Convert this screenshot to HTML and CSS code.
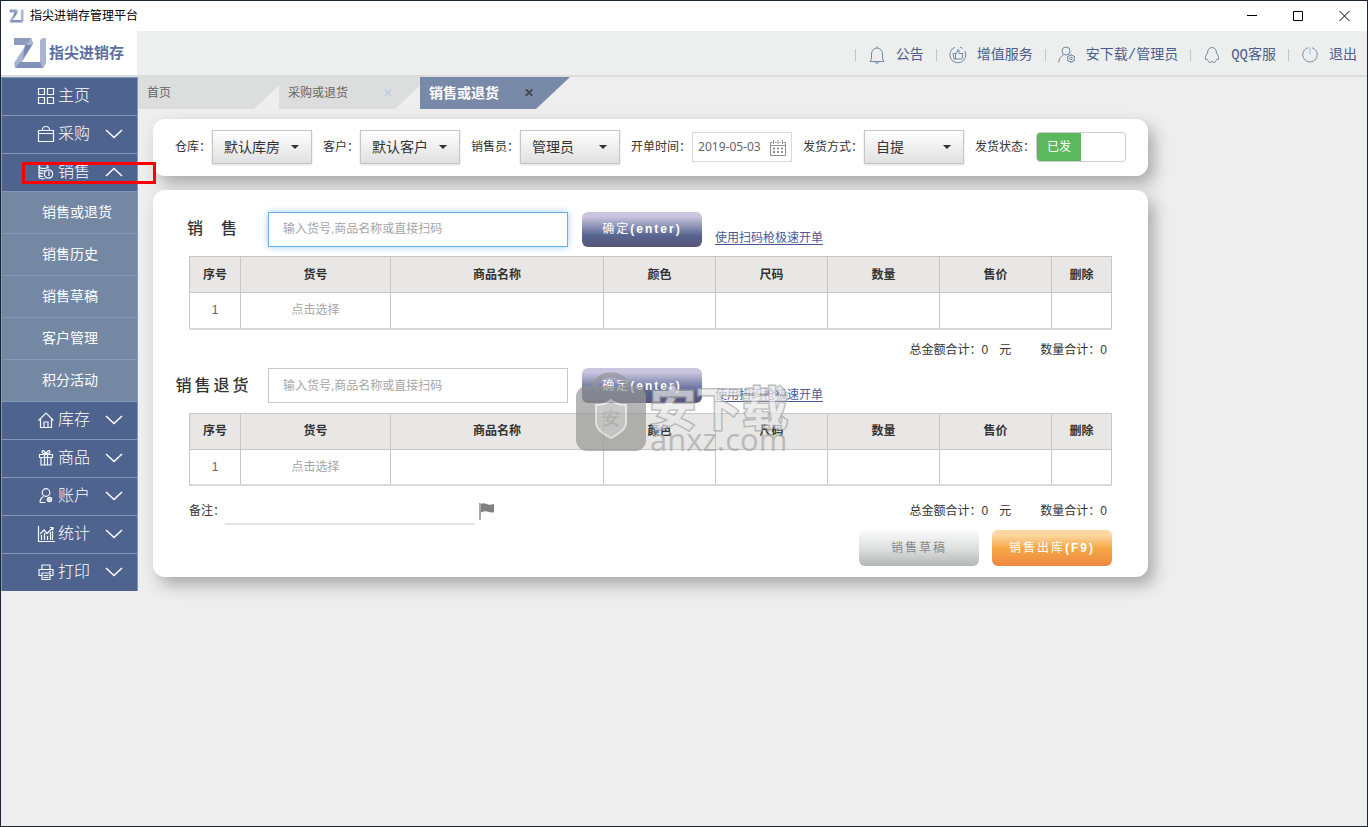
FILE: index.html
```html
<!DOCTYPE html>
<html lang="zh-CN">
<head>
<meta charset="utf-8">
<title>指尖进销存管理平台</title>
<link rel="stylesheet" href="styles.css">
</head>
<body>
<svg class="defs" aria-hidden="true">
  <defs>
    <symbol id="brand" viewBox="0 0 34 32">
      <path d="M1 1h17l2 5-2 2H1z" fill="#8d9cc0"/>
      <path d="M18 1l2 6L9 25 2 31l-1-5L13 8z" fill="#a9b5d1"/>
      <path d="M12 8h6l2-2L10 22z" fill="#7486b1"/>
      <path d="M2 31l5-6h20l6 1-3 5z" fill="#8191b9"/>
      <path d="M27 3l3-2h3v25l-3 5-3-6z" fill="#a9b5d1"/>
    </symbol>
    <symbol id="chevron-down" viewBox="0 0 18 10"><path d="M1 1l8 7.500l8-7.500"/></symbol>
    <symbol id="chevron-up" viewBox="0 0 18 10"><path d="M1 9l8-7.500l8 7.500"/></symbol>
    <symbol id="calendar" viewBox="0 0 16 17">
      <path d="M2.500 3.500h-2v13h15v-13h-2M5 3.500h1.500M9.500 3.500h1.500M.5 6.500h15M3.500 1v4M8 1v4M12.500 1v4"/>
      <path d="M3 9.500h10M3 13h10" stroke-width="2" stroke-dasharray="2 2"/>
    </symbol>
  </defs>
</svg>

<div class="window">
  <header class="titlebar">
    <svg class="titlebar-logo" aria-hidden="true"><use href="#brand"/></svg>
    <h1 class="titlebar-text">指尖进销存管理平台</h1>
    <div class="window-buttons">
      <button type="button" aria-label="最小化"><svg viewBox="0 0 11 11"><path d="M0 4.500h10"/></svg></button>
      <button type="button" aria-label="最大化"><svg viewBox="0 0 11 11"><path d="M.5.5h9v9h-9z"/></svg></button>
      <button type="button" aria-label="关闭"><svg viewBox="0 0 11 11"><path d="M.5 0l10 10M10.500 0l-10 10"/></svg></button>
    </div>
  </header>

  <div class="topbar">
    <a class="logo" href="#home">
      <svg class="logo-mark" aria-hidden="true"><use href="#brand"/></svg>
      <span class="logo-text">指尖进销存</span>
    </a>
    <nav class="topnav">
      <a href="#notice"><svg viewBox="0 0 18 18"><path d="M3.500 13V8a5.500 6 0 0 1 11 0V13l1.500 2.500H2zM9 2V.5M7 16.500q2 1.500 4 0"/></svg>公告</a>
      <a href="#services"><svg viewBox="0 0 18 18"><path d="M6 1.300a8 8 0 1 0 9.800 3.500M11 1.200a8 8 0 0 1 2.500 1.200M4 7.500h2.500v5.500H5zM6.500 7.500h1L8.500 4h1.500v3.500H14l-1 5.500H6.500"/></svg>增值服务</a>
      <a href="#account"><svg viewBox="0 0 18 18"><circle cx="8" cy="5" r="4"/><path d="M.8 16.500C1 12.500 3 10 5.500 9"/><circle cx="13" cy="12.500" r="3.500"/><circle cx="13" cy="12.500" r="1.300"/><path d="M13 8v1M13 16v1M9 10.500l1 .5M16 14l1 .5M17 10.500l-1 .5M9 14.500l1-.5"/></svg>安下载/管理员</a>
      <a href="#qq"><svg viewBox="0 0 18 18"><path d="M9 1.500C6 1.500 4.500 4 4.500 7C2.500 9.500 2 12 2.500 13.500L4 13c.3 1 .8 1.500 1.500 2C5 16.500 7 17 9 15.500C11 17 13 16.500 12.500 15c.7-.5 1.200-1 1.500-2l1.500.5C16 12 15.500 9.500 13.500 7C13.500 4 12 1.500 9 1.500z"/></svg>QQ客服</a>
      <a href="#exit"><svg viewBox="0 0 18 18"><path d="M7 1.800a7.200 7.200 0 1 0 4 0"/><path class="power" d="M9 1v7.500"/></svg>退出</a>
    </nav>
  </div>

  <div class="body">
    <nav class="sidebar">
      <a class="nav-item" href="#home"><svg class="nav-icon" viewBox="0 0 18 18"><path d="M1.500 1.500h6v6h-6zM10.500 1.500h6v6h-6zM1.500 10.500h6v6h-6zM10.500 10.500h6v6h-6z"/></svg>主页</a>
      <a class="nav-item" href="#buy"><svg class="nav-icon" viewBox="0 0 18 18"><path d="M1.500 5.500h15v11h-15zM1.500 8.500h15M5.500 5.500v-1a3.500 3 0 0 1 7 0v1"/></svg>采购<svg class="chevron"><use href="#chevron-down"/></svg></a>
      <a class="nav-item" href="#sell" aria-expanded="true"><svg class="nav-icon" viewBox="0 0 18 18"><ellipse cx="6.500" cy="3.500" rx="4.500" ry="2"/><path d="M2 3.500v11c1 1.500 4 1.500 5.500 1M11 3.500v2M2 6.500c1 1.500 4 1.500 6 1M2 9.500c1 1 3 1 4 1M2 12.500c1 1 3 1 4 1"/><circle cx="11.500" cy="11" r="4.200"/><path d="M11 9h1v4"/></svg>销售<svg class="chevron"><use href="#chevron-up"/></svg></a>
      <div class="subnav">
        <a href="#sell-new">销售或退货</a>
        <a href="#sell-history">销售历史</a>
        <a href="#sell-draft">销售草稿</a>
        <a href="#customers">客户管理</a>
        <a href="#points">积分活动</a>
      </div>
      <a class="nav-item" href="#stock"><svg class="nav-icon" viewBox="0 0 18 18"><path d="M1.500 9.500L9 2l7.500 7.500M3.500 8v8.500h11V8M7 16v-5h4v5"/></svg>库存<svg class="chevron"><use href="#chevron-down"/></svg></a>
      <a class="nav-item" href="#goods"><svg class="nav-icon" viewBox="0 0 18 18"><path d="M2.500 5.500h13v3h-13zM4 8.500v7.500h10V8.500M9 5C7 0 4 1.500 5.500 4zM9 5c2-5 5-3.500 3.500-1z"/><path d="M7.500 5.500v10.500M10.500 5.500v10.500"/></svg>商品<svg class="chevron"><use href="#chevron-down"/></svg></a>
      <a class="nav-item" href="#accounts"><svg class="nav-icon" viewBox="0 0 18 18"><circle cx="9" cy="5.500" r="3.800"/><path d="M3 15.500c0-3 1.500-5 3.500-6M3 15.500h5.500"/><circle cx="12.500" cy="12.500" r="2.200" fill="#cdd6e8"/></svg>账户<svg class="chevron"><use href="#chevron-down"/></svg></a>
      <a class="nav-item" href="#stats"><svg class="nav-icon" viewBox="0 0 18 18"><path d="M1.500 1v15.500H18M4.500 15v-5M7.500 15V8M10.500 15v-4M13.500 15V7M15.500 15V6M3 9l4-4 3 3.500L15.500 3M13 2.500h3V5"/></svg>统计<svg class="chevron"><use href="#chevron-down"/></svg></a>
      <a class="nav-item" href="#print"><svg class="nav-icon" viewBox="0 0 18 18"><path d="M5 6V2h8v4M4.500 12.500H2V6.500h14v6h-2.500M5 10h8v6.500H5zM6.500 12.500h5M6.500 14.500h5M12 8.500h2"/></svg>打印<svg class="chevron"><use href="#chevron-down"/></svg></a>
    </nav>

    <main class="main">
      <div class="tabs">
        <a class="tab" href="#home">首页</a>
        <div class="tab"><a href="#buy-new">采购或退货</a><button type="button" aria-label="关闭采购或退货">✕</button></div>
        <div class="tab active"><a href="#sell-new">销售或退货</a><button type="button" aria-label="关闭销售或退货">✕</button></div>
      </div>

      <div class="content">
        <form class="card filters">
          <div class="field"><label for="depot">仓库：</label><span class="select"><select id="depot"><option>默认库房</option></select></span></div>
          <div class="field"><label for="customer">客户：</label><span class="select"><select id="customer"><option>默认客户</option></select></span></div>
          <div class="field"><label for="seller">销售员：</label><span class="select"><select id="seller"><option>管理员</option></select></span></div>
          <div class="field"><label for="date">开单时间：</label><span class="date"><input id="date" type="text" value="2019-05-03"><svg aria-hidden="true"><use href="#calendar"/></svg></span></div>
          <div class="field"><label for="delivery">发货方式：</label><span class="select"><select id="delivery"><option>自提</option></select></span></div>
          <div class="field"><label for="state">发货状态：</label><span class="switch"><input id="state" type="checkbox" checked><span class="switch-on">已发</span></span></div>
        </form>

        <div class="card order">
          <section>
            <div class="entry">
              <label class="entry-title" for="scan-sell">销&nbsp;&nbsp;售</label>
              <input class="scan focused" id="scan-sell" type="text" placeholder="输入货号,商品名称或直接扫码">
              <button class="button enter" type="button">确定<b>(enter)</b></button>
              <a class="scan-link" href="#scanner">使用扫码枪极速开单</a>
            </div>
            <table class="goods">
              <colgroup><col class="c-index"><col class="c-code"><col class="c-name"><col class="c-mid"><col class="c-mid"><col class="c-mid"><col class="c-mid"><col class="c-del"></colgroup>
              <thead><tr><th>序号</th><th>货号</th><th>商品名称</th><th>颜色</th><th>尺码</th><th>数量</th><th>售价</th><th>删除</th></tr></thead>
              <tbody><tr><td>1</td><td class="pick">点击选择</td><td></td><td></td><td></td><td></td><td></td><td></td></tr></tbody>
            </table>
            <div class="summary">
              <p class="totals"><span>总金额合计：<i>0</i></span><span class="unit">元</span><span>数量合计：<i>0</i></span></p>
            </div>
          </section>

          <section>
            <div class="entry">
              <label class="entry-title" for="scan-return">销售退货</label>
              <input class="scan" id="scan-return" type="text" placeholder="输入货号,商品名称或直接扫码">
              <button class="button enter" type="button">确定<b>(enter)</b></button>
              <a class="scan-link" href="#scanner">使用扫码枪极速开单</a>
            </div>
            <table class="goods">
              <colgroup><col class="c-index"><col class="c-code"><col class="c-name"><col class="c-mid"><col class="c-mid"><col class="c-mid"><col class="c-mid"><col class="c-del"></colgroup>
              <thead><tr><th>序号</th><th>货号</th><th>商品名称</th><th>颜色</th><th>尺码</th><th>数量</th><th>售价</th><th>删除</th></tr></thead>
              <tbody><tr><td>1</td><td class="pick">点击选择</td><td></td><td></td><td></td><td></td><td></td><td></td></tr></tbody>
            </table>
            <div class="summary last">
              <div class="remark">
                <label for="remark">备注：</label><input id="remark" type="text">
                <svg class="flag" viewBox="0 0 16 17" aria-hidden="true"><path d="M0 0h2v17H0z" fill="#aaa"/><path d="M2 1c3-1.500 5 0 7 .5s4 0 6-.5v8c-2 1-4 .5-6-.3S5 8 2 9.500z" fill="#808080"/></svg>
              </div>
              <p class="totals"><span>总金额合计：<i>0</i></span><span class="unit">元</span><span>数量合计：<i>0</i></span></p>
            </div>
          </section>

          <div class="actions">
            <button class="button draft" type="button">销售草稿</button>
            <button class="button submit" type="button">销售出库<b>(F9)</b></button>
          </div>

          <div class="watermark">
            <svg class="lock" viewBox="0 0 70 80" aria-hidden="true">
              <path d="M18 14C24-1 46-1 52 14" fill="none" stroke="#969696" stroke-width="5"/>
              <rect y="14" width="70" height="65" rx="11" fill="#969696"/>
              <path d="M35 28c4 4 9 5 15 5v17c0 8-8 12-15 16c-7-4-15-8-15-16V33c6 0 11-1 15-5z" fill="#b4b4b4" stroke="#dedede" stroke-width="2"/>
              <text x="35" y="53" text-anchor="middle">安</text>
            </svg>
            <div class="watermark-text"><span class="mark-name">安下载</span><span class="mark-url">anxz.com</span></div>
          </div>
        </div>
      </div>
    </main>
  </div>
  <div class="highlight"></div>
</div>
</body>
</html>
```
FILE: styles.css
```css
:root {
  --cjk: "Noto Sans CJK SC", sans-serif;
  --navy: #4f638f;
  --line: #8698ba;
  --grid: #c6c6c6;
}

* { box-sizing: border-box; }

body {
  margin: 0;
  color: #333;
  font: 12px/18px "Liberation Sans", var(--cjk);
}

button, input, select { font: inherit; color: inherit; margin: 0; }
button { border: 0; padding: 0; background: none; cursor: pointer; }
a { color: inherit; text-decoration: none; }
i { font-style: normal; }
.defs { position: absolute; width: 0; height: 0; }

.window {
  position: relative;
  display: flex;
  flex-direction: column;
  min-height: 100vh;
  border: 1px solid #1c2734;
  background: #eee;
}

/* Title bar */
.titlebar {
  display: flex;
  align-items: center;
  height: 30px;
  padding-left: 7px;
  background: #fff;
  color: #000;
}
.titlebar-logo { width: 17px; height: 14px; margin-right: 5px; }
.titlebar-text { margin: 0; font-size: 12px; font-weight: 400; }
.window-buttons { display: flex; margin-left: auto; }
.window-buttons button { display: grid; place-items: center; width: 46px; height: 30px; }
.window-buttons svg { width: 11px; height: 11px; fill: none; stroke: #000; }

/* Top bar */
.topbar {
  display: flex;
  justify-content: space-between;
  height: 46px;
  border-bottom: 2px solid #dcdddd;
  background: #edefee;
}
.logo {
  display: flex;
  align-items: center;
  gap: 2px;
  width: 136px;
  padding-left: 12px;
  background: #fff;
}
.logo-mark { width: 34px; height: 32px; }
.logo-text { color: #5b6f9f; font-size: 15px; font-weight: 700; white-space: nowrap; }
.topnav {
  display: flex;
  align-items: center;
  padding: 3px 10px 0 0;
  color: #4c5e8e;
  font: 14px/20px "Liberation Mono", var(--cjk);
}
.topnav a { display: flex; align-items: center; gap: 10px; padding-right: 12px; white-space: nowrap; }
.topnav a:last-child { padding-right: 0; }
.topnav a::before { content: ""; width: 1px; height: 12px; margin-right: 2px; background: #c4c6c6; }
.topnav svg { width: 18px; height: 18px; fill: none; stroke: #7488a6; }
.topnav .power { stroke: #8fc4e8; }

.body { display: flex; flex: 1; align-items: flex-start; }

/* Side navigation */
.sidebar {
  flex: none;
  width: 137px;
  border: solid var(--line);
  border-width: 0 1px;
  color: #fff;
}
.nav-item {
  display: flex;
  align-items: center;
  height: 38px;
  padding: 0 0 2px 35px;
  border-top: 1px solid var(--line);
  background: var(--navy);
  font-size: 16px;
  font-weight: 300;
}
.nav-icon { width: 18px; height: 18px; margin-right: 3px; fill: none; stroke: #f4f7fc; stroke-width: 1.2; }
.chevron { width: 18px; height: 10px; margin: 0 14px 0 auto; fill: none; stroke: #fff; stroke-width: 1.5; }
.subnav a {
  display: flex;
  align-items: center;
  height: 42px;
  padding: 0 0 2px 40px;
  border-top: 1px solid var(--line);
  background: #7488a3;
  font-size: 14px;
}

/* Tabs */
.main { flex: 1; min-width: 0; }
.tabs { display: flex; height: 32px; color: #666; }
.tab {
  display: flex;
  align-items: center;
  justify-content: space-between;
  width: 150px;
  margin-right: -9px;
  padding: 0 36px 0 9px;
  background: #dcdddd;
  clip-path: polygon(0 0, 100% 0, 116px 100%, 0 100%);
}
.tab button { color: #b5cdea; font-size: 12px; }
.tab.active { background: #788aa7; color: #fff; font-size: 14px; font-weight: 700; }
.tab.active button { color: #444; }

/* Cards */
.content { display: grid; gap: 14px; max-width: 1025px; padding: 10px 15px 30px; }
.card {
  border-radius: 12px;
  background: #fff;
  box-shadow: 6px 8px 16px #aaa;
}
.filters {
  display: flex;
  flex-wrap: wrap;
  align-items: center;
  gap: 11px;
  padding: 11px 0 12px 22px;
}
.field { display: flex; align-items: center; gap: 1px; white-space: nowrap; }
.select { display: grid; align-items: center; width: 100px; }
.select > select, .select::after { grid-area: 1 / 1; }
.select::after {
  content: "";
  justify-self: end;
  margin-right: 13px;
  border: 4px solid transparent;
  border-top-color: #333;
  border-bottom: 0;
  pointer-events: none;
}
.select select {
  appearance: none;
  width: 100%;
  height: 34px;
  padding: 0 11px;
  border: 1px solid #c6c6c6;
  border-radius: 0;
  background: linear-gradient(#fff, #e0e0e0);
  box-shadow: 0 1px 2px #ddd;
  font-size: 14px;
}
.date {
  display: flex;
  align-items: center;
  width: 100px;
  height: 30px;
  padding: 0 5px;
  border: 1px solid #d8d8d8;
  color: #666;
}
.date input {
  flex: 1;
  min-width: 0;
  padding: 0;
  border: 0;
  outline: 0;
  background: none;
  font-family: "Noto Sans", sans-serif;
}
.date svg { width: 16px; height: 17px; fill: none; stroke: #909090; }
.switch {
  display: grid;
  grid-template-columns: 1fr 1fr;
  width: 90px;
  height: 30px;
  overflow: hidden;
  border: 1px solid #ccc;
  border-radius: 4px;
}
.switch > * { grid-row: 1; }
.switch input { grid-column: 1 / 3; opacity: 0; }
.switch-on { grid-column: 1; background: #5cb85c; color: #fff; line-height: 28px; text-align: center; pointer-events: none; }

/* Order form */
.order { position: relative; padding: 21px 36px 11px; }
.entry { display: flex; align-items: center; height: 36px; margin-bottom: 9px; }
.entry-title {
  width: 79px;
  margin: 0 15px 0 -15px;
  font-size: 16px;
  font-weight: 500;
  letter-spacing: 3px;
  text-align: center;
  white-space: nowrap;
}
.scan {
  width: 300px;
  height: 35px;
  padding: 0 14px;
  border: 1px solid #c9c9c9;
  border-radius: 0;
  outline: 0;
}
.scan.focused { border-color: #66afe9; box-shadow: 0 0 7px #a2cdf0; }
.scan::placeholder { color: #a6a6a6; opacity: 1; }
.button {
  width: 120px;
  height: 36px;
  border-radius: 6px;
  letter-spacing: 2px;
  color: #fff;
}
.enter {
  height: 35px;
  margin: 0 13px 0 14px;
  background: linear-gradient(#cbc5e0 0, #cbc5e0 12%, #55648f 68%, #5b5578 100%);
}
.scan-link { align-self: flex-end; color: #4c5799; text-decoration: underline; text-underline-offset: 2px; }

.goods {
  width: 100%;
  border: 1px solid #d8d8d8;
  border-bottom-width: 2px;
  border-collapse: collapse;
  table-layout: fixed;
  text-align: center;
}
.goods th, .goods td { height: 36px; padding: 0; border: 1px solid var(--grid); }
.goods th { background: #e8e7e5; font-weight: 700; }
.goods td { color: #666; }
.goods .pick { color: #a6a6a6; }
.c-index { width: 51px; }
.c-code { width: 150px; }
.c-mid { width: 112px; }
.c-del { width: 60px; }

.summary { display: flex; align-items: center; height: 38px; padding-top: 2px; }
.summary.last { height: 44px; padding-top: 6px; }
.totals { display: flex; margin: 0 5px 0 auto; }
.unit { margin: 0 29px 0 11px; }
.remark { display: flex; align-items: center; }
.remark input {
  width: 250px;
  height: 28px;
  padding: 0;
  border: 0;
  border-bottom: 2px solid #e5e5e5;
  outline: 0;
}
.flag { width: 16px; height: 17px; margin-left: 4px; }

.actions { display: flex; justify-content: flex-end; gap: 13px; }
.draft { background: linear-gradient(#fbfbfb, #dfe0e0 50%, #b5b6b6); color: #888; }
.submit { background: linear-gradient(#fbd6a0 0, #fbd6a0 15%, #f5a945 50%, #f08742 100%); }

/* Overlays */
.watermark {
  position: absolute;
  top: 181px;
  left: 423px;
  display: flex;
  gap: 4px;
  opacity: 0.7;
  pointer-events: none;
}
.lock { width: 70px; height: 82px; }
.lock text { fill: #999; font: 500 18px var(--cjk); }
.watermark-text { display: flex; flex-direction: column; padding-top: 10px; color: #a8a8a8; }
.mark-name {
  color: #e8e8e8;
  font: 700 46px/48px var(--cjk);
  -webkit-text-stroke: 3px #a4a4a4;
  paint-order: stroke fill;
}
.mark-url { font: 31px/20px "Open Sans", sans-serif; }
.highlight {
  position: absolute;
  top: 161px;
  left: 21px;
  width: 134px;
  height: 22px;
  border: 3px solid #f00;
  pointer-events: none;
}
```
